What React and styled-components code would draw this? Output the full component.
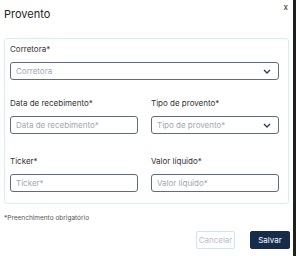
import React from 'react';
import styled, { createGlobalStyle } from 'styled-components';

const GlobalStyle = createGlobalStyle`
  html, body {
    margin: 0;
    padding: 0;
    background: #fff;
  }
  body {
    font-family: Inter, "Noto Sans", sans-serif;
    color: #333;
  }
  * { box-sizing: border-box; }
`;

const Frame = styled.div`
  width: 296px;
  height: 256px;
  display: flex;
  background: #fff;
`;

const Modal = styled.div`
  flex: 1;
  padding: 4px 0 0 4px;
  display: flex;
  flex-direction: column;
`;

const EdgeBar = styled.div`
  width: 3px;
  background: #1f1f1f;
`;

const Header = styled.div`
  display: flex;
  justify-content: space-between;
  align-items: flex-start;
  height: 34px;
  padding-right: 5px;
`;

const Title = styled.h2`
  margin: 3px 0 0 0;
  font-size: 11px;
  line-height: 14px;
  font-weight: 400;
  color: #222;
`;

const Close = styled.span`
  font-size: 8px;
  color: #444;
  line-height: 1;
  margin-top: -1px;
  font-weight: 500;
`;

const Fieldset = styled.div`
  width: 285px;
  border: 1px solid #d4f0f1;
  border-radius: 3px;
  padding: 3px 9px 11px 5px;
  display: flex;
  flex-direction: column;
`;

const Row = styled.div`
  display: grid;
  grid-template-columns: ${(p) => p.$cols || '1fr'};
  column-gap: 13px;
  margin-top: ${(p) => p.$mt || 0}px;
`;

const Field = styled.div`
  display: flex;
  flex-direction: column;
`;

const Label = styled.label`
  font-size: 8px;
  color: #333;
  height: 20px;
  line-height: 14px;
`;

const Box = styled.div`
  height: 18px;
  border: 1px solid #5f6c80;
  border-radius: 3px;
  display: flex;
  align-items: center;
  justify-content: space-between;
  padding: 0 7px 0 5px;
  font-size: 8px;
  color: #a0a7b2;
`;

const Note = styled.div`
  font-size: 6.5px;
  line-height: 10px;
  color: #555;
  margin-top: 9px;
`;

const Actions = styled.div`
  display: flex;
  justify-content: flex-end;
  gap: 15px;
  margin-top: 8px;
  padding-right: 3px;
`;

const Button = styled.button`
  height: 18px;
  padding: 0;
  width: ${(p) => p.$w}px;
  border-radius: 2px;
  font-family: inherit;
  font-size: 8px;
  border: 1px solid ${(p) => (p.$primary ? '#172b4a' : '#c6e9ec')};
  background: ${(p) => (p.$primary ? '#172b4a' : '#fff')};
  color: ${(p) => (p.$primary ? '#fff' : '#b4c0cc')};
`;

const Chevron = () => (
  <svg width="8" height="5" viewBox="0 0 8 5" fill="none">
    <path d="M1 1l3 3 3-3" stroke="#2a3a52" strokeWidth="1.3" />
  </svg>
);

const Input = ({ text, select }) => (
  <Box>
    <span>{text}</span>
    {select && <Chevron />}
  </Box>
);

export default function App() {
  return (
    <>
      <GlobalStyle />
      <Frame>
        <Modal>
          <Header>
            <Title>Provento</Title>
            <Close>x</Close>
          </Header>
          <Fieldset>
            <Row>
              <Field>
                <Label>Corretora*</Label>
                <Input text="Corretora" select />
              </Field>
            </Row>
            <Row $cols="1fr 1fr" $mt={16}>
              <Field>
                <Label>Data de recebimento*</Label>
                <Input text="Data de recebimento*" />
              </Field>
              <Field>
                <Label>Tipo de provento*</Label>
                <Input text="Tipo de provento*" select />
              </Field>
            </Row>
            <Row $cols="1fr 1fr" $mt={20}>
              <Field>
                <Label>Ticker*</Label>
                <Input text="Ticker*" />
              </Field>
              <Field>
                <Label>Valor líquido*</Label>
                <Input text="Valor líquido*" />
              </Field>
            </Row>
          </Fieldset>
          <Note>*Preenchimento obrigatório</Note>
          <Actions>
            <Button $w={39}>Cancelar</Button>
            <Button $w={40} $primary>Salvar</Button>
          </Actions>
        </Modal>
        <EdgeBar />
      </Frame>
    </>
  );
}
